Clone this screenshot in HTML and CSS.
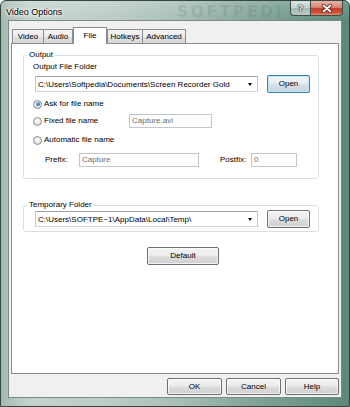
FILE: index.html
```html
<!DOCTYPE html>
<html>
<head>
<meta charset="utf-8">
<link rel="stylesheet" href="styles.css">
</head>
<body>
<div class="window">
  <div class="wm wm-title">SOFTPEDI</div>
  <div class="titlebar">
    <span class="title">Video Options</span>
    <div class="caption">
      <div class="cap-btn cap-help">?</div>
      <div class="cap-btn cap-close">
        <svg width="12" height="9" viewBox="0 0 12 9"><path d="M2.5 1.5L9.5 7.5M9.5 1.5L2.5 7.5" stroke="#4a1d15" stroke-width="3.4" stroke-linecap="round"/><path d="M2.5 1.5L9.5 7.5M9.5 1.5L2.5 7.5" stroke="#fff" stroke-width="1.8" stroke-linecap="round"/></svg>
      </div>
    </div>
  </div>
  <div class="client">
    <div class="tabs">
      <div class="tab t-video">Video</div>
      <div class="tab t-audio">Audio</div>
      <div class="tab t-file active">File</div>
      <div class="tab t-hotkeys">Hotkeys</div>
      <div class="tab t-adv">Advanced</div>
    </div>
    <div class="panel">
      <fieldset class="group g-output">
        <legend>Output</legend>
        <div class="gbody">
          <div class="sublabel">Output File Folder</div>
          <div class="combo-row">
            <div class="combo"><span>C:\Users\Softpedia\Documents\Screen Recorder Gold</span><i class="arrow"></i></div>
            <div class="btn btn-focus btn-open">Open</div>
          </div>
          <div class="radio-row r1"><span class="radio checked"></span><span class="rtext">Ask for file name</span></div>
          <div class="radio-row r2"><div class="rlabel"><span class="radio"></span><span class="rtext">Fixed file name</span></div><div class="edit e-fixed">Capture.avi</div></div>
          <div class="radio-row r3"><span class="radio"></span><span class="rtext">Automatic file name</span></div>
          <div class="affix-row">
            <span class="alabel a-prefix">Prefix:</span><div class="edit e-prefix">Capture</div>
            <span class="alabel a-postfix">Postfix:</span><div class="edit e-postfix">0</div>
          </div>
        </div>
      </fieldset>
      <fieldset class="group g-temp">
        <legend>Temporary Folder</legend>
        <div class="gbody">
          <div class="combo-row">
            <div class="combo"><span>C:\Users\SOFTPE~1\AppData\Local\Temp\</span><i class="arrow"></i></div>
            <div class="btn btn-open">Open</div>
          </div>
        </div>
      </fieldset>
      <div class="btn btn-defaults">Default</div>
    </div>
    <div class="buttons">
      <div class="btn b-ok">OK</div>
      <div class="btn b-cancel">Cancel</div>
      <div class="btn b-help">Help</div>
    </div>
  </div>
</div>
</body>
</html>
```
FILE: styles.css
```css
html, body {
  margin: 0;
  padding: 0;
  background: #ffffff;
}
body {
  font-family: "Liberation Sans", Arial, sans-serif;
  font-size: 8px;
  color: #000;
}
.window {
  width: 350px;
  height: 407px;
  box-sizing: border-box;
  border: 1px solid #34473f;
  border-radius: 6px 6px 0 0;
  display: flex;
  flex-direction: column;
  position: relative;
  overflow: hidden;
  background:
    linear-gradient(180deg, rgba(255,255,255,0.18) 0px, rgba(255,255,255,0) 20px),
    linear-gradient(90deg, #a3b9af 0%, #c4d3cc 8%, #bccdc5 30%, #a9c0b6 50%, #86a79b 70%, #6a9587 88%, #5b8779 100%);
}
.titlebar {
  height: 19px;
  display: flex;
  justify-content: space-between;
  align-items: flex-start;
  flex: none;
  position: relative;
  z-index: 2;
}
.title {
  font-size: 9px;
  line-height: 12px;
  margin: 5px 0 0 5px;
  color: #000;
  text-shadow: 0 0 3px #fff, 0 0 5px #fff, 0 0 2px #fff;
}
.caption {
  display: flex;
  margin-right: 6px;
}
.cap-btn {
  height: 15px;
  box-sizing: border-box;
  border: 1px solid #3e4f4b;
  border-top: none;
  display: flex;
  align-items: center;
  justify-content: center;
}
.cap-help {
  width: 20px;
  border-right: none;
  border-radius: 0 0 0 4px;
  background: linear-gradient(180deg, #dbe5e1 0%, #c2d2cc 48%, #a4b9b2 52%, #b8cbc4 100%);
  color: #fff;
  font-weight: bold;
  font-size: 9px;
  text-shadow: 0 0 1px #223, 0 0 1px #223, 0 0 2px #223;
}
.cap-close {
  width: 33px;
  border-radius: 0 0 4px 0;
  background: linear-gradient(180deg, #eab2a4 0%, #dc8a74 45%, #c4402a 52%, #cc4c34 78%, #e2876a 100%);
}
.client {
  flex: 1;
  margin: 0 7px 8px 7px;
  border: 1px solid #788b85;
  background: #f0f0f0;
  display: flex;
  flex-direction: column;
  padding: 6px 2px 0 2px;
}
.tabs {
  height: 16px;
  display: flex;
  align-items: flex-start;
  padding-left: 1px;
  flex: none;
}
.tab {
  box-sizing: border-box;
  height: 14px;
  margin-top: 2px;
  border: 1px solid #898c95;
  border-bottom: none;
  background: linear-gradient(180deg, #f4f4f4 0%, #ececec 50%, #e0e0e0 51%, #d8d8d8 100%);
  display: flex;
  align-items: center;
  justify-content: center;
  line-height: 10px;
  padding-top: 1px;
}
.t-video { width: 32px; }
.t-audio { width: 30px; margin-left: -1px; }
.t-file { width: 34px; }
.t-hotkeys { width: 36px; }
.t-adv { width: 44px; margin-left: -1px; }
.tab.active {
  height: 17px;
  margin-top: 0;
  margin-bottom: -1px;
  background: #ffffff;
  position: relative;
  z-index: 2;
  align-items: flex-start;
  padding-top: 3px;
}
.panel {
  height: 331px;
  box-sizing: border-box;
  border: 1px solid #898c95;
  background: #ffffff;
  position: relative;
  z-index: 1;
  padding: 6px 19px 0 11px;
  flex: none;
}
.group {
  margin: 0;
  padding: 0;
  border: 1px solid #d5dfe5;
  border-radius: 3px;
  min-width: 0;
}
.group legend {
  padding: 0 2px;
  margin-left: 3px;
  line-height: 10px;
  font-size: 8px;
}
.gbody {
  padding-left: 9px;
}
.g-output .gbody {
  padding-bottom: 11px;
}
.g-temp {
  margin-top: 21px;
}
.g-temp .gbody {
  padding-bottom: 3px;
}
.sublabel {
  line-height: 10px;
  margin-top: 2px;
}
.combo-row {
  height: 18px;
  display: flex;
  align-items: center;
  margin-top: 3px;
}
.g-temp .combo-row {
  margin-top: 0;
}
.combo {
  width: 223px;
  height: 16px;
  box-sizing: border-box;
  margin-left: 2px;
  border: 1px solid #a9abb0;
  border-color: #a3a6ab #c4c7cc #d2d5da #c4c7cc;
  background: #fff;
  display: flex;
  align-items: center;
  justify-content: space-between;
  padding: 0 5px 0 2px;
  white-space: nowrap;
}
.arrow {
  width: 0;
  height: 0;
  border-left: 2.5px solid transparent;
  border-right: 2.5px solid transparent;
  border-top: 3px solid #000;
}
.btn {
  box-sizing: border-box;
  border: 1px solid #707070;
  border-radius: 2px;
  background: linear-gradient(180deg, #f3f3f3 0%, #ebebeb 48%, #dddddd 52%, #cfcfcf 100%);
  box-shadow: inset 0 0 0 1px rgba(255,255,255,0.7);
  display: flex;
  align-items: center;
  justify-content: center;
  line-height: 10px;
}
.btn-open {
  width: 43px;
  height: 18px;
  margin-left: 9px;
}
.btn-focus {
  border-color: #3c7fb1;
  background: linear-gradient(180deg, #f1f6f9 0%, #e6edf2 48%, #d7e0e7 52%, #cbd6de 100%);
  box-shadow: inset 0 0 0 1px rgba(190,230,253,0.9);
}
.radio-row {
  display: flex;
  align-items: center;
}
.r1 { height: 10px; margin-top: 6px; }
.r2 { height: 14px; margin-top: 5px; }
.r3 { height: 10px; margin-top: 7px; }
.rlabel {
  width: 96px;
  display: flex;
  align-items: center;
}
.radio {
  width: 9px;
  height: 9px;
  box-sizing: border-box;
  border: 1px solid #8e8f8f;
  border-radius: 50%;
  background: radial-gradient(circle at 50% 40%, #ffffff 0%, #e6e6e6 55%, #cfcfcf 100%);
  position: relative;
  flex: none;
}
.radio.checked::after {
  content: "";
  position: absolute;
  left: 1.5px;
  top: 1.5px;
  width: 4px;
  height: 4px;
  border-radius: 50%;
  background: radial-gradient(circle at 40% 35%, #7fc4f5 0%, #2a73b8 55%, #123f73 100%);
}
.rtext {
  margin-left: 2px;
  line-height: 10px;
  white-space: nowrap;
}
.edit {
  height: 14px;
  box-sizing: border-box;
  border: 1px solid #c3c6cb;
  background: #fff;
  color: #6d6d6d;
  display: flex;
  align-items: center;
  padding-left: 2px;
  line-height: 10px;
}
.e-fixed { width: 83px; }
.affix-row {
  height: 14px;
  margin-top: 8px;
  display: flex;
  align-items: center;
  padding-left: 12px;
}
.alabel {
  line-height: 10px;
}
.a-prefix { width: 34px; }
.e-prefix { width: 120px; }
.a-postfix { width: 31px; margin-left: 21px; }
.e-postfix { width: 46px; }
.btn-defaults {
  width: 72px;
  height: 18px;
  margin: 15px 0 0 124px;
}
.buttons {
  margin-top: 4px;
  height: 17px;
  display: flex;
  justify-content: flex-end;
  gap: 4px;
  flex: none;
}
.b-ok, .b-cancel { width: 55px; }
.b-help { width: 54px; }
.wm {
  position: absolute;
  pointer-events: none;
  white-space: nowrap;
  font-family: "DejaVu Sans", sans-serif;
  font-weight: bold;
}
.wm-title {
  left: 176px;
  top: 2px;
  font-size: 15px;
  letter-spacing: 3px;
  color: rgba(60, 100, 90, 0.16);
  z-index: 1;
}
```
